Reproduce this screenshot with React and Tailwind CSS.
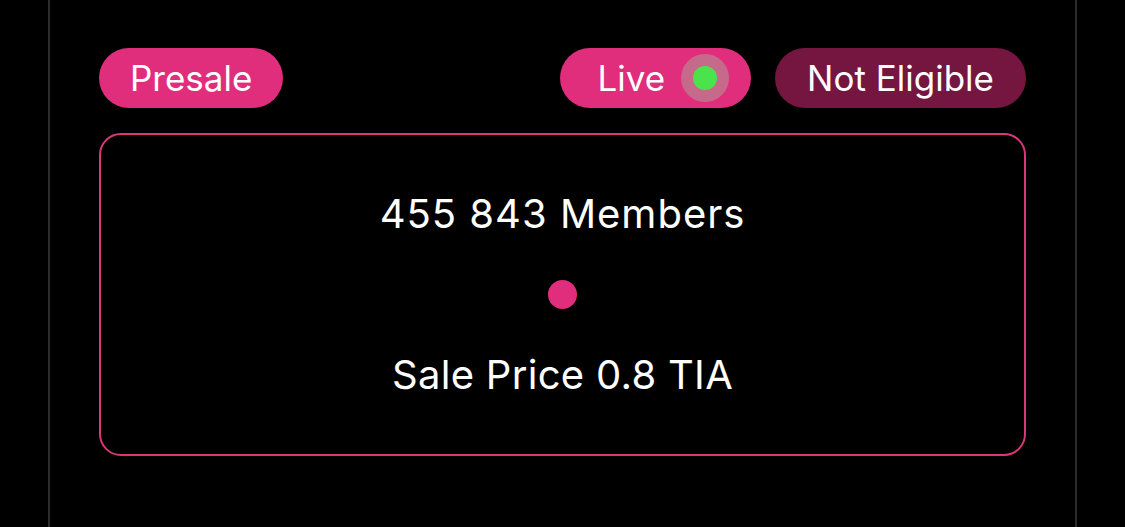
export default function App() {
  return (
    <div className="min-h-[527px] bg-black flex justify-center" style={{ fontFamily: "Inter, 'Noto Sans', sans-serif" }}>
      <div className="w-[1029px] min-h-[527px] border-x-2 border-[#2c2c2c] px-[49px] pt-[48px]">
        <div className="flex items-center justify-between">
          <span className="h-[60px] px-[31px] rounded-full bg-[#e02d7c] text-white text-[35px] flex items-center">
            Presale
          </span>
          <div className="flex items-center gap-[24px]">
            <span className="h-[60px] pl-[37px] pr-[22px] rounded-full bg-[#e02d7c] text-white text-[35px] flex items-center gap-[16px]">
              Live
              <span className="w-[48px] h-[48px] rounded-full bg-[#c66a8b] flex items-center justify-center">
                <span className="w-[24px] h-[24px] rounded-full bg-[#4be34b]"></span>
              </span>
            </span>
            <span className="h-[60px] px-[32px] rounded-full bg-[#74163f] text-white text-[35px] flex items-center">
              Not Eligible
            </span>
          </div>
        </div>
        <div className="mt-[25px] h-[323px] rounded-[22px] border-2 border-[#d9377a] flex flex-col items-center justify-center gap-[43px] text-white text-[40px] leading-[46px]">
          <span className="tracking-[1px]">455 843 Members</span>
          <span className="w-[29px] h-[29px] rounded-full bg-[#e02d7c]"></span>
          <span className="tracking-[0.3px]">Sale Price 0.8 TIA</span>
        </div>
      </div>
    </div>
  )
}
